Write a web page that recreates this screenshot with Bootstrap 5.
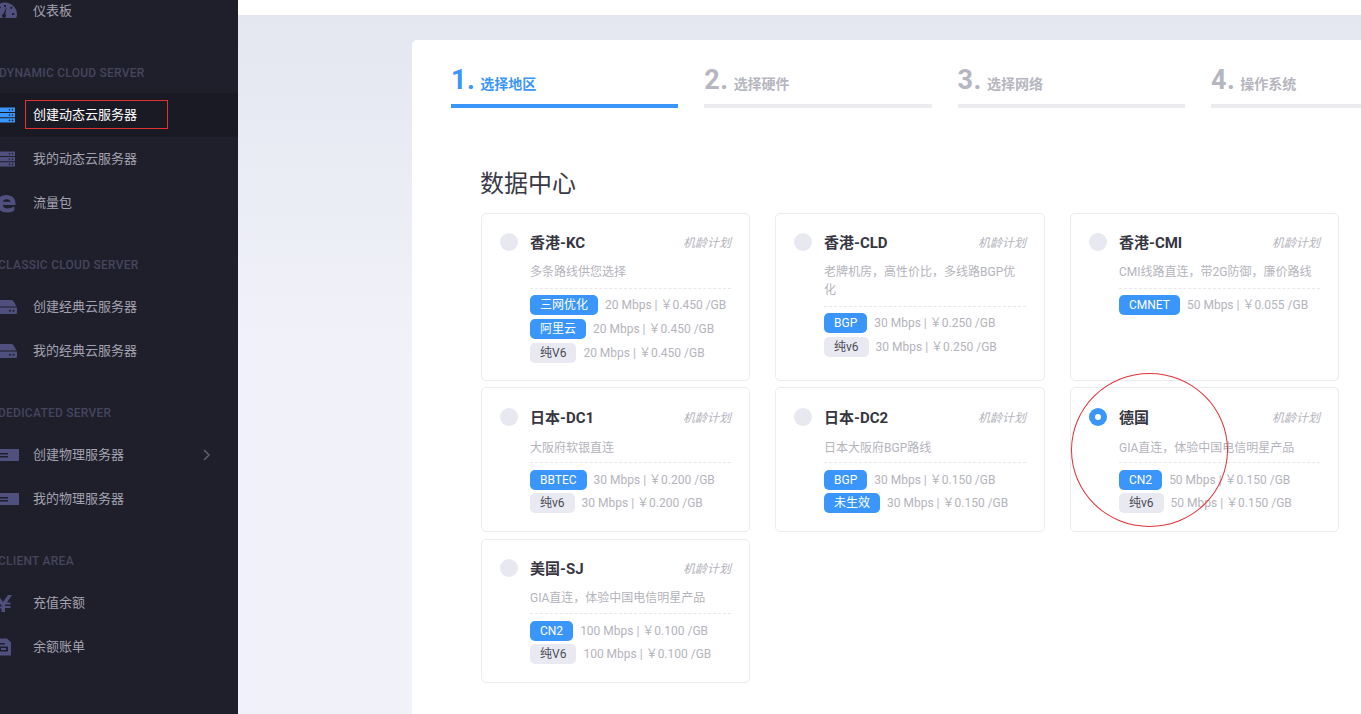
<!DOCTYPE html>
<html lang="zh-CN">
<head>
<meta charset="utf-8">
<title>创建动态云服务器</title>
<link rel="stylesheet" href="https://cdn.jsdelivr.net/npm/bootstrap@5.3.0/dist/css/bootstrap.min.css">
<style>
html,body{height:714px;overflow:hidden;}
body{font-family:Roboto,"Noto Sans CJK SC",sans-serif;background:#eef0f7;font-size:13px;color:#3a3a46;}
.shell{width:1361px;height:714px;overflow:hidden;}
.side{width:238px;flex:none;height:714px;overflow:hidden;background:#1f1f2b;padding-top:0;margin:0;}
.side-list{margin-top:-11px;}
.side-row{height:44px;color:#a2a2b0;font-size:13px;position:relative;}
.side-row.on{background:#1a1a25;color:#fff;}
.side-row svg.ic{width:24px;height:24px;margin-left:-7px;margin-right:16px;flex:none;fill:#50507e;overflow:visible;}
.side-row.on svg.ic{fill:#3a96fb;}
.side-head{height:60px;padding-top:30px;line-height:20px;font-size:12px;font-weight:500;color:#45455e;letter-spacing:.25px;white-space:nowrap;margin-left:-2px;}
.side-head.c0{margin-left:-1px;}
.chev{position:absolute;left:203px;top:16px;width:8px;height:12px;fill:none;stroke:#5d5d70;stroke-width:1.6;}
.note-box{position:absolute;left:25px;top:7px;width:143px;height:29px;border:1px solid #e0332f;}
.mainw{flex:1 1 auto;min-width:0;background:linear-gradient(#e4e6f0,#f1f2f9 50%);height:714px;overflow:hidden;}
.topb{height:15px;background:#fff;}
.pan{margin:25px -200px 0 174px;height:700px;background:#fff;border-radius:5px 0 0 0;padding:27px 0 0 39px;}
.steps{display:flex;gap:26px;width:1200px;}
.stp{width:227.3px;flex:none;height:41px;border-bottom:4px solid #ececf0;color:#b6b6c0;display:flex;align-items:baseline;gap:5px;line-height:26px;}
.stp b{font-size:27px;font-weight:700;letter-spacing:.5px;}
.stp span{font-size:14px;font-weight:700;}
.stp.on{border-color:#3a96fb;color:#3a96fb;}
.dch{font-size:24px;font-weight:400;line-height:34px;margin:59px 0 12px 29px;color:#3a3a46;}
.dc-grid{display:grid;grid-template-columns:269px 270px 269px;column-gap:25px;margin-left:30px;width:860px;}
.dc-grid .r1{height:168px;margin-bottom:6px;}
.dc-grid .r2{height:145px;margin-bottom:7px;padding-top:20px;}
.dc-grid .r3{height:144px;}
.dc{border:1px solid #ebecf0;border-radius:5px;background:#fff;position:relative;padding:19px 18px 0 18px;display:flex;}
.rad{width:18px;height:18px;border-radius:50%;background:#e7e8f0;flex:none;margin-right:12px;}
.rad.sel{background:#3a96fb;position:relative;}
.rad.sel::after{content:"";position:absolute;left:6px;top:6px;width:6px;height:6px;border-radius:50%;background:#fff;}
.dc-b{flex:1 1 auto;min-width:0;}
.dc-t{display:flex;justify-content:space-between;line-height:20px;}
.dc-t b{font-size:15px;font-weight:700;color:#363642;}
.dc-t i{font-size:12px;color:#b4b4bc;font-style:italic;}
.dc-d{font-size:12px;line-height:18px;color:#b4b4bc;margin-top:10px;padding-bottom:7px;border-bottom:1px dashed #e8e8ec;}
.r2 .dc-d{margin-top:11px;padding-bottom:5px;}
.r3 .dc-d{padding-bottom:6px;}
.dc-l{font-size:12px;color:#b4b4bc;line-height:20px;height:24px;white-space:nowrap;}
.dc-l.t{height:23px;}
.dc-ls{margin-top:6px;}
.r2 .dc-ls,.r3 .dc-ls{margin-top:7px;}
.tg{display:inline-block;height:20px;line-height:20px;padding:0 10px;border-radius:5px;background:#3a96fb;color:#fff;margin-right:7px;}
.tg.g{background:#e9eaf1;color:#4a4a56;}
.cir{position:absolute;left:0;top:-15px;width:157px;height:154px;border:1px solid #e0333a;border-radius:50%;pointer-events:none;}
</style>
</head>
<body>
<svg width="0" height="0" class="position-absolute">
<defs>
<symbol id="srv" viewBox="0 0 24 24"><path fill-rule="evenodd" d="M0 4.500h22v4.400H0zM0 9.900h22v4.400H0zM0 15.200h22v4.400H0z"/><circle cx="19.500" cy="6.700" r=".8" fill="#1f1f2b"/><circle cx="16.500" cy="6.700" r=".8" fill="#1f1f2b"/><circle cx="19.500" cy="12.100" r=".8" fill="#1f1f2b"/><circle cx="16.500" cy="12.100" r=".8" fill="#1f1f2b"/><circle cx="19.500" cy="17.400" r=".8" fill="#1f1f2b"/><circle cx="16.500" cy="17.400" r=".8" fill="#1f1f2b"/></symbol>
<symbol id="hdd" viewBox="0 0 24 24"><path d="M6 5h12c1.200 0 2.200.6 3 2l2.500 4.500H.5L3 7c.8-1.400 1.800-2 3-2z"/><path d="M0 12.500h24v5A1.500 1.500 0 0 1 22.500 19H1.500A1.500 1.500 0 0 1 0 17.500z"/><circle cx="17" cy="15.800" r="1" fill="#1f1f2b"/><circle cx="20.500" cy="15.800" r="1" fill="#1f1f2b"/></symbol>
</defs>
</svg>
<div class="shell d-flex">
<aside class="side">
<div class="side-list">
<div class="side-row d-flex align-items-center"><svg class="ic" viewBox="0 0 24 24"><path fill-rule="evenodd" d="M12 3.500a12 12 0 0 0-12 12c0 1.800.4 3 1.300 3.500h21.400c.9-.5 1.300-1.700 1.300-3.500a12 12 0 0 0-12-12zM13.500 8l-1.200 7.300a2 2 0 1 1-2-.4zM11 6h2v2h-2zM5.500 8.500 7 7.300l1 1.300-1.400 1.200zM18.300 7.500l1.300 1.200-1.300 1.400-1.300-1.200zM3 14h2.300v2H3zM19 14h2.300v2H19z"/></svg><span>仪表板</span></div>

<div class="side-head c0">DYNAMIC CLOUD SERVER</div>
<div class="side-row on d-flex align-items-center"><svg class="ic"><use href="#srv"/></svg><span>创建动态云服务器</span><div class="note-box"></div></div>
<div class="side-row d-flex align-items-center"><svg class="ic"><use href="#srv"/></svg><span>我的动态云服务器</span></div>
<div class="side-row d-flex align-items-center"><svg class="ic" viewBox="0 0 24 24"><path fill-rule="evenodd" d="M13.500 4c5.500 0 9 3.500 9 8.500v1.500H9.800c.3 2.200 2 3.500 4.500 3.500 2.200 0 4.500-.7 7-2v4.200c-2.200 1.100-4.700 1.800-7.200 1.800-6 0-10.100-3.500-10.100-8.800S8 4 13.500 4zm.2 4.200c-2 0-3.500 1.100-3.900 2.600h7.800c-.3-1.500-1.800-2.600-3.900-2.600z"/></svg><span>流量包</span></div>

<div class="side-head">CLASSIC CLOUD SERVER</div>
<div class="side-row d-flex align-items-center"><svg class="ic"><use href="#hdd"/></svg><span>创建经典云服务器</span></div>
<div class="side-row d-flex align-items-center"><svg class="ic"><use href="#hdd"/></svg><span>我的经典云服务器</span></div>

<div class="side-head">DEDICATED SERVER</div>
<div class="side-row d-flex align-items-center"><svg class="ic" viewBox="0 0 24 24"><path d="M0 6h26v12H0z"/><path d="M0 10h15v1.500H0zM0 13h15v1.500H0z" fill="#1f1f2b"/></svg><span>创建物理服务器</span><svg class="chev" viewBox="0 0 8 12"><path d="M1 1l5 5-5 5"/></svg></div>
<div class="side-row d-flex align-items-center"><svg class="ic" viewBox="0 0 24 24"><path d="M0 6h26v12H0z"/><path d="M0 10h15v1.500H0zM0 13h15v1.500H0z" fill="#1f1f2b"/></svg><span>我的物理服务器</span></div>

<div class="side-head">CLIENT AREA</div>
<div class="side-row d-flex align-items-center"><svg class="ic" viewBox="0 0 24 24"><path d="M1 4h4l5 7 5-7h4l-5 7.500h3.500v2h-5.500v1.500h5.500v2h-5.500V21h-3.500v-3.500H3v-2h5.500V13.500H3v-2h3.500z"/></svg><span>充值余额</span></div>
<div class="side-row d-flex align-items-center"><svg class="ic" viewBox="0 0 24 24"><path fill-rule="evenodd" d="M3 3.500h11l4 4v13H3zM6 8v1.500h6V8zM6 11.500v5h9v-5zm2 1.500h5v2H8z"/></svg><span>余额账单</span></div>
</div>
</aside>
<main class="mainw">
<div class="topb"></div>
<div class="pan">
<div class="steps">
<div class="stp on"><b>1.</b><span>选择地区</span></div>
<div class="stp"><b>2.</b><span>选择硬件</span></div>
<div class="stp"><b>3.</b><span>选择网络</span></div>
<div class="stp"><b>4.</b><span>操作系统</span></div>
</div>
<h2 class="dch">数据中心</h2>
<div class="dc-grid">
<div class="dc r1"><div class="rad"></div><div class="dc-b"><div class="dc-t"><b>香港-KC</b><i>机龄计划</i></div><div class="dc-d">多条路线供您选择</div><div class="dc-ls"><div class="dc-l"><span class="tg">三网优化</span>20 Mbps | ￥0.450 /GB</div><div class="dc-l"><span class="tg">阿里云</span>20 Mbps | ￥0.450 /GB</div><div class="dc-l"><span class="tg g">纯V6</span>20 Mbps | ￥0.450 /GB</div></div></div></div>
<div class="dc r1"><div class="rad"></div><div class="dc-b"><div class="dc-t"><b>香港-CLD</b><i>机龄计划</i></div><div class="dc-d">老牌机房，高性价比，多线路BGP优化</div><div class="dc-ls"><div class="dc-l"><span class="tg">BGP</span>30 Mbps | ￥0.250 /GB</div><div class="dc-l"><span class="tg g">纯v6</span>30 Mbps | ￥0.250 /GB</div></div></div></div>
<div class="dc r1"><div class="rad"></div><div class="dc-b"><div class="dc-t"><b>香港-CMI</b><i>机龄计划</i></div><div class="dc-d">CMI线路直连，带2G防御，廉价路线</div><div class="dc-ls"><div class="dc-l"><span class="tg">CMNET</span>50 Mbps | ￥0.055 /GB</div></div></div></div>

<div class="dc r2"><div class="rad"></div><div class="dc-b"><div class="dc-t"><b>日本-DC1</b><i>机龄计划</i></div><div class="dc-d">大阪府软银直连</div><div class="dc-ls"><div class="dc-l t"><span class="tg">BBTEC</span>30 Mbps | ￥0.200 /GB</div><div class="dc-l t"><span class="tg g">纯v6</span>30 Mbps | ￥0.200 /GB</div></div></div></div>
<div class="dc r2"><div class="rad"></div><div class="dc-b"><div class="dc-t"><b>日本-DC2</b><i>机龄计划</i></div><div class="dc-d">日本大阪府BGP路线</div><div class="dc-ls"><div class="dc-l t"><span class="tg">BGP</span>30 Mbps | ￥0.150 /GB</div><div class="dc-l t"><span class="tg">未生效</span>30 Mbps | ￥0.150 /GB</div></div></div></div>
<div class="dc r2"><div class="rad sel"></div><div class="dc-b"><div class="dc-t"><b>德国</b><i>机龄计划</i></div><div class="dc-d">GIA直连，体验中国电信明星产品</div><div class="dc-ls"><div class="dc-l t"><span class="tg">CN2</span>50 Mbps | ￥0.150 /GB</div><div class="dc-l t"><span class="tg g">纯v6</span>50 Mbps | ￥0.150 /GB</div></div></div><div class="cir"></div></div>

<div class="dc r3"><div class="rad"></div><div class="dc-b"><div class="dc-t"><b>美国-SJ</b><i>机龄计划</i></div><div class="dc-d">GIA直连，体验中国电信明星产品</div><div class="dc-ls"><div class="dc-l t"><span class="tg">CN2</span>100 Mbps | ￥0.100 /GB</div><div class="dc-l t"><span class="tg g">纯V6</span>100 Mbps | ￥0.100 /GB</div></div></div></div>
</div>
</div>
</main>
</div>
<script src="https://cdn.jsdelivr.net/npm/bootstrap@5.3.0/dist/js/bootstrap.bundle.min.js"></script>
</body>
</html>
